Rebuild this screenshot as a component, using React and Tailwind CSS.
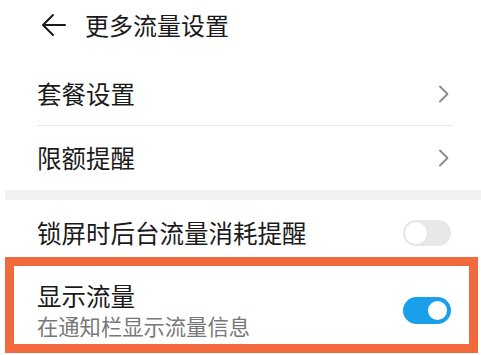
import React from "react";

function Chevron() {
  return (
    <svg width="12" height="18" viewBox="0 0 12 18" fill="none">
      <path d="M2 1.5 L9.5 9 L2 16.5" stroke="#8a8a8a" strokeWidth="1.8" strokeLinecap="round" strokeLinejoin="round" />
    </svg>
  );
}

function Toggle({ on }) {
  if (on) {
    return (
      <div className="w-[48px] h-[27px] rounded-full bg-[#1aa0ea] flex items-center justify-end pr-[2px]">
        <div className="w-[23px] h-[23px] rounded-full bg-white border-[2px] border-[#1aa0ea]" />
      </div>
    );
  }
  return (
    <div className="w-[48px] h-[26px] rounded-full bg-[#e8e8e8] flex items-center pl-[1px]">
      <div className="w-[24px] h-[24px] rounded-full bg-white border border-[#e2e2e2]" />
    </div>
  );
}

export default function App() {
  return (
    <div
      className="relative w-[481px] h-[355px] bg-white overflow-hidden"
      style={{ fontFamily: '"Noto Sans CJK SC", "Noto Sans", sans-serif' }}
    >
      <div className="h-[50px] flex items-center pl-[41px]">
        <svg width="25" height="24" viewBox="0 0 25 24" fill="none">
          <path d="M24 12 H2 M12 2 L2 12 L12 22" stroke="#1a1a1a" strokeWidth="2" strokeLinecap="round" strokeLinejoin="round" />
        </svg>
        <span className="ml-[19px] text-[24px] leading-[32px] text-[#1a1a1a]">更多流量设置</span>
      </div>
      <div className="mt-[12px] h-[63px] flex items-center justify-between pl-[37px] pr-[31px]">
        <span className="text-[24.5px] leading-[32px] text-[#1a1a1a]">套餐设置</span>
        <Chevron />
      </div>
      <div className="ml-[37px] mr-[28px] h-px bg-[#e8e8e8]" />
      <div className="h-[64px] flex items-center justify-between pl-[37px] pr-[31px]">
        <span className="text-[24.5px] leading-[32px] text-[#1a1a1a]">限额提醒</span>
        <Chevron />
      </div>
      <div className="ml-[5px] h-[10px] bg-[#f2f2f2]" />
      <div className="h-[66px] flex items-center justify-between pl-[37px] pr-[30px]">
        <span className="text-[24.5px] leading-[32px] text-[#1a1a1a]">锁屏时后台流量消耗提醒</span>
        <Toggle on={false} />
      </div>
      <div className="flex items-center justify-between pl-[37px] pr-[30px] pt-[14px]">
        <div className="flex flex-col">
          <span className="text-[24.5px] leading-[32px] text-[#1a1a1a]">显示流量</span>
          <span className="text-[21.3px] leading-[28px] text-[#777777]">在通知栏显示流量信息</span>
        </div>
        <Toggle on={true} />
      </div>
      <div className="absolute left-[5px] top-[257px] w-[473px] h-[96px] border-[9px] border-[#f26a3b]" />
    </div>
  );
}
